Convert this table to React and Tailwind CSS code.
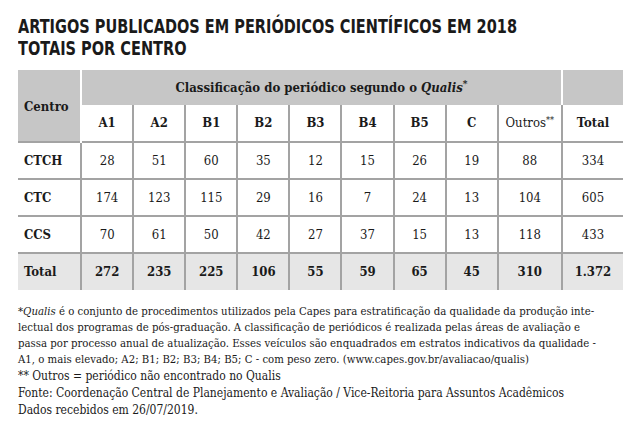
import React from 'react';

// colunas de classificação Qualis
const cols = ['A1', 'A2', 'B1', 'B2', 'B3', 'B4', 'B5', 'C'];

const rows = [
  { centro: 'CTCH', values: [28, 51, 60, 35, 12, 15, 26, 19, 88], total: '334' },
  { centro: 'CTC', values: [174, 123, 115, 29, 16, 7, 24, 13, 104], total: '605' },
  { centro: 'CCS', values: [70, 61, 50, 42, 27, 37, 15, 13, 118], total: '433' },
];

const totals = [272, 235, 225, 106, 55, 59, 65, 45, 310];

const App = () => {
  return (
    <div className="w-[640px] h-[442px] bg-white overflow-hidden pl-[18px] pt-[15px] text-[#1a1a1a]">
      <h1 className="inline-block origin-left scale-x-[0.85] whitespace-nowrap font-['DejaVu_Sans_Condensed','Liberation_Sans',sans-serif] font-bold text-[19px] leading-[22px]">
        ARTIGOS PUBLICADOS EM PERIÓDICOS CIENTÍFICOS EM 2018
        <br />
        TOTAIS POR CENTRO
      </h1>

      <table className="mt-[9px] border-collapse font-['DejaVu_Serif_Condensed','DejaVu_Serif',serif] text-[13px] table-fixed w-[605px]">
        <colgroup>
          <col className="w-[63px]" />
          {cols.map(c => (
            <col key={c} className="w-[52px]" />
          ))}
          <col className="w-[64px]" />
          <col className="w-[61px]" />
        </colgroup>
        <thead>
          <tr className="h-[35px]">
            <th rowSpan={2} className="bg-[#c6c6c6] text-left font-bold pl-[6px] pt-[2px] border-r-2 border-r-white">
              Centro
            </th>
            <th colSpan={9} className="bg-[#c6c6c6] font-bold text-center border-r-2 border-r-white">
              Classificação do periódico segundo o <i>Qualis</i>
              <sup className="text-[10px]">*</sup>
            </th>
            <th className="bg-[#c6c6c6]"></th>
          </tr>
          <tr className="h-[37px] border-b-2 border-b-[#a3a3a3]">
            {cols.map(c => (
              <th key={c} className="font-bold border-r-2 border-r-[#a3a3a3]">
                {c}
              </th>
            ))}
            <th className="font-normal border-r-2 border-r-[#a3a3a3]">
              Outros<sup className="text-[9px]">**</sup>
            </th>
            <th className="font-bold">Total</th>
          </tr>
        </thead>
        <tbody>
          {rows.map(r => (
            <tr key={r.centro} className="h-[37px] border-b-2 border-b-[#a3a3a3]">
              <td className="font-bold pl-[6px] border-r-2 border-r-[#a3a3a3]">{r.centro}</td>
              {r.values.map((v, i) => (
                <td key={i} className="text-center border-r-2 border-r-[#a3a3a3]">
                  {v}
                </td>
              ))}
              <td className="text-center">{r.total}</td>
            </tr>
          ))}
          <tr className="h-[37px] bg-[#e6e6e6]">
            <td className="font-bold pl-[6px] border-r-2 border-r-[#a3a3a3]">Total</td>
            {totals.map((v, i) => (
              <td key={i} className="text-center font-bold border-r-2 border-r-[#a3a3a3]">
                {v}
              </td>
            ))}
            <td className="text-center font-bold">1.372</td>
          </tr>
        </tbody>
      </table>

      <div className="mt-[14px] font-['DejaVu_Serif_Condensed','DejaVu_Serif',serif] whitespace-nowrap">
        <p className="text-[11.3px] leading-[16px]">
          *<i>Qualis</i> é o conjunto de procedimentos utilizados pela Capes para estratificação da qualidade da produção inte-
          <br />
          lectual dos programas de pós-graduação. A classificação de periódicos é realizada pelas áreas de avaliação e
          <br />
          passa por processo anual de atualização. Esses veículos são enquadrados em estratos indicativos da qualidade -
          <br />
          A1, o mais elevado; A2; B1; B2; B3; B4; B5; C - com peso zero. (www.capes.gov.br/avaliacao/qualis)
        </p>
        <div className="text-[12px] leading-[17px]">
          <p>** Outros = periódico não encontrado no Qualis</p>
          <p>Fonte: Coordenação Central de Planejamento e Avaliação / Vice-Reitoria para Assuntos Acadêmicos</p>
          <p>Dados recebidos em 26/07/2019.</p>
        </div>
      </div>
    </div>
  );
};

export default App;
